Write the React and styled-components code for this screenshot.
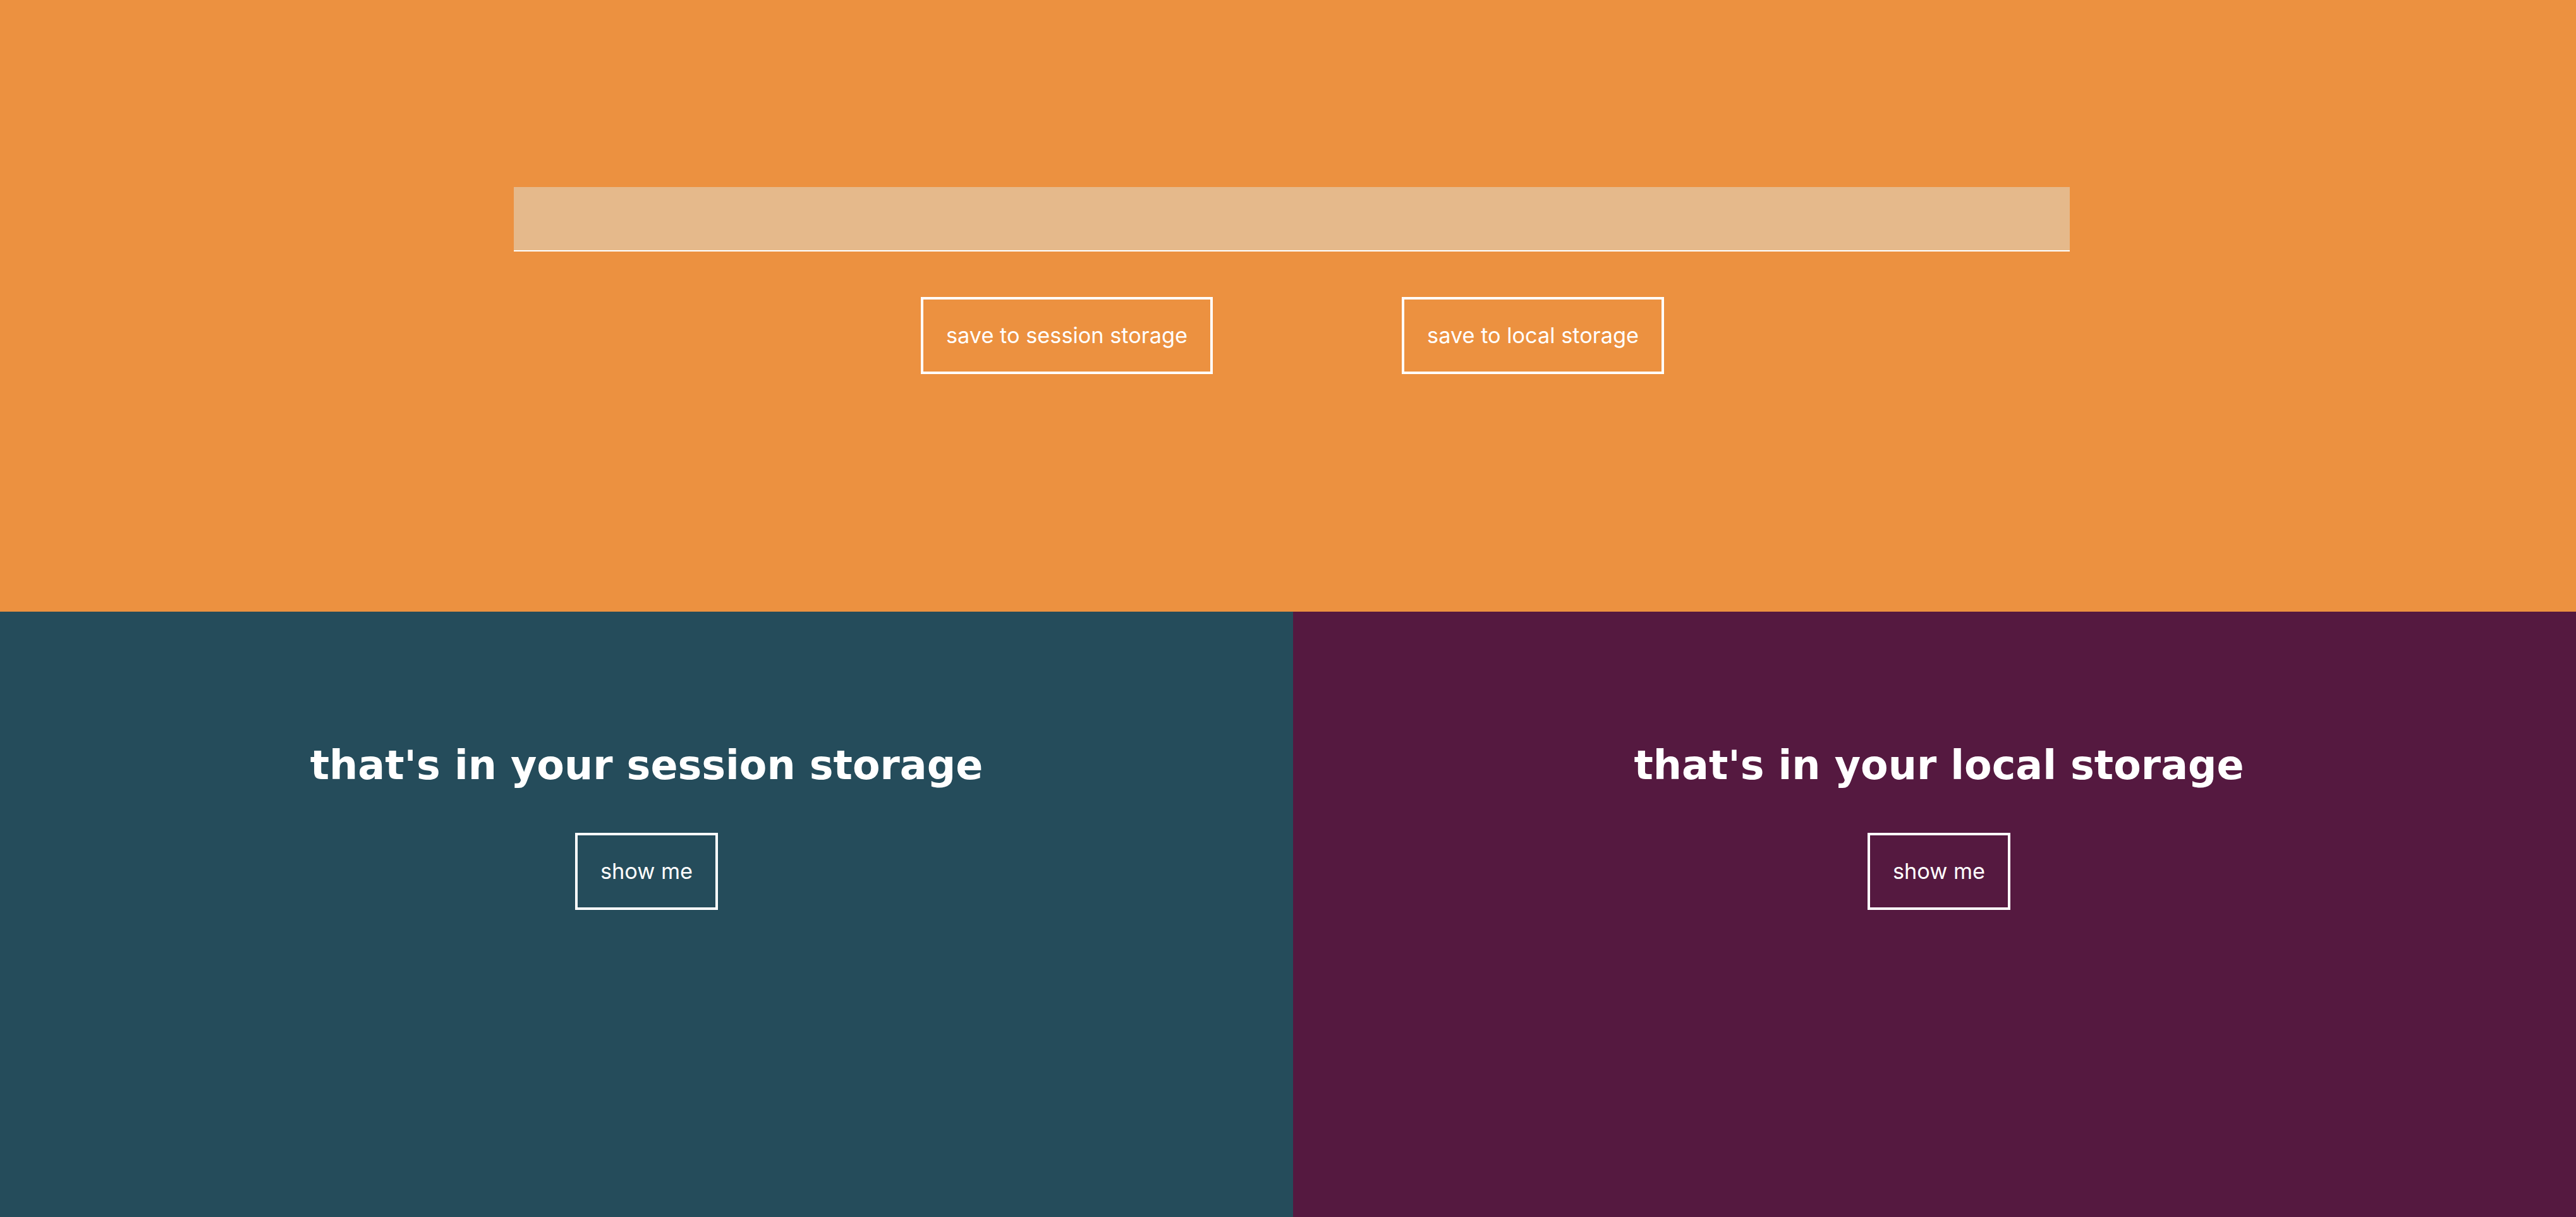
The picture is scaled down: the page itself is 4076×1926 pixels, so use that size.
import React, { useState } from "react";
import styled, { createGlobalStyle } from "styled-components";

const GlobalStyle = createGlobalStyle`
  html, body {
    margin: 0;
    padding: 0;
    overflow: hidden;
    background: #254c5b;
  }
  * {
    box-sizing: border-box;
  }
`;

const App = () => {
  const [value, setValue] = useState("");

  return (
    <Page>
      <GlobalStyle />
      <Top>
        <Field value={value} onChange={(e) => setValue(e.target.value)} />
        <Actions>
          <Button>save to session storage</Button>
          <Button>save to local storage</Button>
        </Actions>
      </Top>
      <Bottom>
        <Panel bg="#254c5b">
          <Heading>that's in your session storage</Heading>
          <Button>show me</Button>
        </Panel>
        <Panel bg="#551940">
          <Heading>that's in your local storage</Heading>
          <Button>show me</Button>
        </Panel>
      </Bottom>
    </Page>
  );
};

export default App;

const Page = styled.main`
  width: 4090px;
  min-height: 1926px;
  display: flex;
  flex-direction: column;
`;

const Top = styled.section`
  height: 968px;
  background: #ec9140;
  display: flex;
  flex-direction: column;
  align-items: center;
  padding-top: 296px;
`;

const Field = styled.input`
  width: 2462px;
  height: 102px;
  margin-right: 2px;
  border: none;
  border-bottom: 2px solid #fff;
  background: #e5b98b;
  outline: none;
  padding: 0 30px;
  font-family: Inter, "Liberation Sans", sans-serif;
  font-size: 36px;
  color: #fff;
`;

const Actions = styled.div`
  display: flex;
  gap: 299px;
  margin-top: 72px;
`;

const Button = styled.button`
  background: transparent;
  border: 4px solid #fff;
  color: #fff;
  font-family: Inter, "Liberation Sans", sans-serif;
  font-size: 34.3px;
  line-height: 42px;
  padding: 36px 36px;
  cursor: pointer;
`;

const Bottom = styled.section`
  flex: 1;
  display: grid;
  grid-template-columns: 2046px 1fr;
`;

const Panel = styled.div`
  background: ${(p) => p.bg};
  display: flex;
  flex-direction: column;
  align-items: center;
  padding-top: 206px;
`;

const Heading = styled.h2`
  margin: 0 0 70px;
  font-family: "DejaVu Sans", Verdana, sans-serif;
  font-weight: 700;
  font-size: 63.5px;
  color: #fff;
`;
